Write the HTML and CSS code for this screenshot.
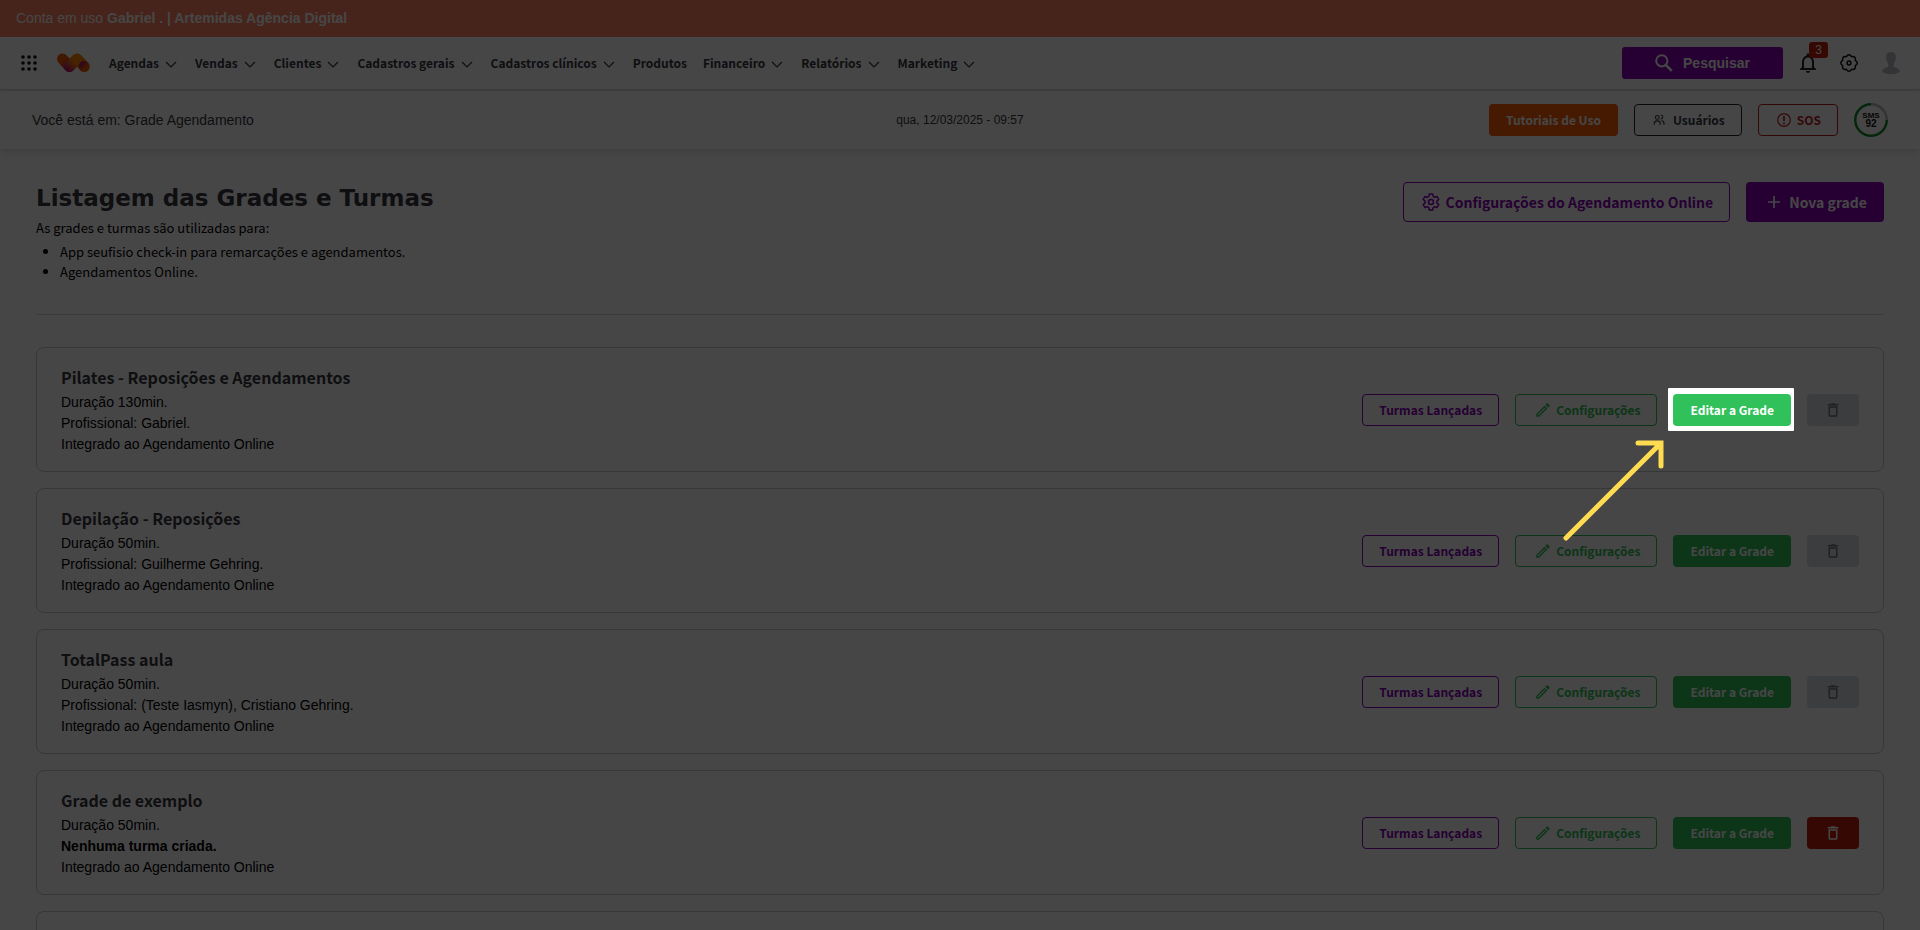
FILE: index.html
```html
<!DOCTYPE html>
<html lang="pt-BR">
<head>
<meta charset="utf-8">
<meta name="viewport" content="width=device-width, initial-scale=1">
<title>Grade Agendamento</title>
<link rel="stylesheet" href="styles.css">
</head>
<body>
<svg class="sprite" aria-hidden="true">
  <symbol id="chevron" viewBox="0 0 16 16"><path d="M3 7l5 5 5-5" fill="none" stroke="currentColor" stroke-width="1.2"/></symbol>
  <symbol id="pencil" viewBox="0 0 24 24"><path fill="currentColor" d="M14.06 9.02l.92.92L5.92 19H5v-.92l9.06-9.06M17.66 3c-.25 0-.51.1-.7.29l-1.83 1.83 3.75 3.75 1.83-1.83c.39-.39.39-1.02 0-1.41l-2.34-2.34c-.2-.2-.45-.29-.71-.29zm-3.6 3.19L3 17.25V21h3.75L17.81 9.94l-3.75-3.75z"/></symbol>
  <symbol id="trash" viewBox="0 0 24 24"><path fill="currentColor" d="M6 19c0 1.1.9 2 2 2h8c1.1 0 2-.9 2-2V7H6v12zM8 9h8v10H8V9zm7.5-5l-1-1h-5l-1 1H5v2h14V4z"/></symbol>
</svg>

<div class="account-bar">Conta em uso <b>Gabriel . | Artemidas Agência Digital</b></div>

<header class="navbar">
  <button class="icon-btn" aria-label="Aplicativos">
    <svg width="16" height="16" viewBox="0 0 16 16" fill="#111"><circle cx="2" cy="2" r="1.8"/><circle cx="8" cy="2" r="1.8"/><circle cx="14" cy="2" r="1.8"/><circle cx="2" cy="8" r="1.8"/><circle cx="8" cy="8" r="1.8"/><circle cx="14" cy="8" r="1.8"/><circle cx="2" cy="14" r="1.8"/><circle cx="8" cy="14" r="1.8"/><circle cx="14" cy="14" r="1.8"/></svg>
  </button>
  <a class="logo" href="#" aria-label="Início">
    <svg width="33" height="20" viewBox="0 0 33 20">
      <defs>
        <linearGradient id="lg1" gradientUnits="userSpaceOnUse" x1="2" y1="3" x2="15" y2="17"><stop offset="0.3" stop-color="#f25a00"/><stop offset="0.9" stop-color="#b0147a"/></linearGradient>
        <linearGradient id="lg2" gradientUnits="userSpaceOnUse" x1="23" y1="3" x2="10" y2="18"><stop offset="0.4" stop-color="#ff8400"/><stop offset="1" stop-color="#b0147a"/></linearGradient>
        <linearGradient id="lg3" gradientUnits="userSpaceOnUse" x1="23" y1="9" x2="31" y2="18"><stop offset="0.1" stop-color="#a8146a"/><stop offset="0.7" stop-color="#f25a00"/></linearGradient>
      </defs>
      <g fill="none" stroke-linecap="round" stroke-linejoin="round" stroke-width="11">
        <path d="M5.500 6L12.500 13.500" stroke="url(#lg1)"/>
        <path d="M12.500 13.500L20 6L25 11" stroke="url(#lg2)"/>
      </g>
      <circle cx="27.200" cy="13.500" r="5.500" fill="url(#lg3)"/>
    </svg>
  </a>
  <nav class="menu">
    <a href="#">Agendas<svg><use href="#chevron"/></svg></a>
    <a href="#">Vendas<svg><use href="#chevron"/></svg></a>
    <a href="#">Clientes<svg><use href="#chevron"/></svg></a>
    <a href="#">Cadastros gerais<svg><use href="#chevron"/></svg></a>
    <a href="#">Cadastros clínicos<svg><use href="#chevron"/></svg></a>
    <a href="#">Produtos</a>
    <a href="#">Financeiro<svg><use href="#chevron"/></svg></a>
    <a href="#">Relatórios<svg><use href="#chevron"/></svg></a>
    <a href="#">Marketing<svg><use href="#chevron"/></svg></a>
  </nav>
  <div class="tools">
    <button class="search">
      <svg width="18" height="18" viewBox="0 0 18 18" fill="none" stroke="currentColor" stroke-width="2"><circle cx="6.800" cy="6.800" r="5.600"/><path d="M10.800 10.800l6 6" stroke-width="2.600"/></svg>
      Pesquisar
    </button>
    <button class="icon-btn bell" aria-label="Notificações">
      <svg width="24" height="24" viewBox="0 0 24 24"><path fill="#222" d="M12 22c1.1 0 2-.9 2-2h-4c0 1.1.9 2 2 2zm6-6v-5c0-3.070-1.630-5.640-4.500-6.320V4c0-.83-.67-1.500-1.500-1.500s-1.500.67-1.500 1.500v.68C7.640 5.360 6 7.920 6 11v5l-2 2v1h16v-1l-2-2zm-2 1H8v-6c0-2.480 1.510-4.500 4-4.500s4 2.020 4 4.500v6z"/></svg>
      <span class="badge">3</span>
    </button>
    <button class="icon-btn gear" aria-label="Ajustes">
      <svg width="20" height="20" viewBox="0 0 20 20" fill="none" stroke="#111" stroke-width="1.500" stroke-linejoin="round"><path d="M16.300 7.400Q20.200 10 16.300 12.600Q17.200 17.200 12.600 16.300Q10 20.200 7.400 16.300Q2.800 17.200 3.700 12.600Q-.2 10 3.700 7.400Q2.800 2.800 7.400 3.700Q10-.2 12.600 3.700Q17.200 2.800 16.300 7.400z"/><circle cx="10" cy="10" r="1.900"/></svg>
    </button>
    <button class="icon-btn avatar" aria-label="Perfil">
      <svg width="22" height="24" viewBox="0 0 22 24" fill="#bdbdc4"><path d="M11 1c3.300 0 5 2 4.800 5.500-.1 2.500-.8 4.700-2 6v3c1.800 1.500 5 1.800 6.200 4.500C17 24.300 5 24.300 2 20c1.200-2.700 4.400-3 6.200-4.500v-3c-1.200-1.300-1.900-3.500-2-6C6 3 7.700 1 11 1z"/></svg>
    </button>
  </div>
</header>

<div class="subbar">
  <div class="crumb">Você está em: Grade Agendamento</div>
  <time class="clock" datetime="2025-03-12T09:57">qua, 12/03/2025 - 09:57</time>
  <div class="shortcuts">
    <button class="btn orange">Tutoriais de Uso</button>
    <button class="btn dark">
      <svg width="12" height="12" viewBox="0 0 14 14" fill="none" stroke="currentColor" stroke-width="1.300"><circle cx="5" cy="4" r="2.200"/><path d="M1.500 12.500V11c0-2 1.500-3 3.500-3s3.500 1 3.500 3v1.500M9 1.200c3.200.3 3.200 4.500 0 5M10 7.500c2 .5 2.800 1.800 2.800 3.500v1.500"/></svg>
      Usuários
    </button>
    <button class="btn red-line">
      <svg width="14" height="14" viewBox="0 0 14 14"><circle cx="7" cy="7" r="6.300" fill="none" stroke="currentColor" stroke-width="1.200"/><path d="M7 3v5M7 9.500v1.700" stroke="currentColor" stroke-width="1.700"/></svg>
      SOS
    </button>
    <div class="sms"><span>SMS</span><span class="count">92</span></div>
  </div>
</div>

<main>
  <section class="intro">
    <div>
      <h1>Listagem das Grades e Turmas</h1>
      <p>As grades e turmas são utilizadas para:</p>
      <ul>
        <li>App seufisio check-in para remarcações e agendamentos.</li>
        <li>Agendamentos Online.</li>
      </ul>
    </div>
    <div class="intro-actions">
      <button class="btn large purple-line">
        <svg width="18" height="18" viewBox="0 0 18 18" fill="none" stroke="currentColor" stroke-width="1.500" stroke-linejoin="round"><path d="M7.300 1h3.400l.5 2.400 1.500.9 2.400-.8 1.700 3-1.900 1.600v1.800l1.900 1.600-1.700 3-2.400-.8-1.500.9-.5 2.400H7.300l-.5-2.400-1.500-.9-2.400.8-1.700-3 1.900-1.600V8.100L1.200 6.500l1.700-3 2.400.8 1.500-.9z"/><circle cx="9" cy="9" r="2.500"/></svg>
        Configurações do Agendamento Online
      </button>
      <button class="btn large purple">
        <svg width="18" height="18" viewBox="0 0 18 18"><path d="M9 3v12M3 9h12" stroke="currentColor" stroke-width="1.700"/></svg>
        Nova grade
      </button>
    </div>
  </section>

  <section class="cards">
    <article class="card">
      <div class="info">
        <h2>Pilates - Reposições e Agendamentos</h2>
        <p>Duração 130min.</p>
        <p>Profissional: Gabriel.</p>
        <p>Integrado ao Agendamento Online</p>
      </div>
      <div class="actions">
        <button class="btn purple-line">Turmas Lançadas</button>
        <button class="btn green-line"><svg class="pencil"><use href="#pencil"/></svg>Configurações</button>
        <div class="spotlight">
          <button class="btn green">Editar a Grade</button>
          <svg class="arrow" width="106" height="106" viewBox="0 0 106 106" fill="none" stroke="#ffdc50" stroke-width="5" stroke-linecap="round"><path d="M5 100L99 6M77 5h23v23"/></svg>
        </div>
        <button class="btn trash" disabled aria-label="Excluir"><svg><use href="#trash"/></svg></button>
      </div>
    </article>

    <article class="card">
      <div class="info">
        <h2>Depilação - Reposições</h2>
        <p>Duração 50min.</p>
        <p>Profissional: Guilherme Gehring.</p>
        <p>Integrado ao Agendamento Online</p>
      </div>
      <div class="actions">
        <button class="btn purple-line">Turmas Lançadas</button>
        <button class="btn green-line"><svg class="pencil"><use href="#pencil"/></svg>Configurações</button>
        <button class="btn green">Editar a Grade</button>
        <button class="btn trash" disabled aria-label="Excluir"><svg><use href="#trash"/></svg></button>
      </div>
    </article>

    <article class="card">
      <div class="info">
        <h2>TotalPass aula</h2>
        <p>Duração 50min.</p>
        <p>Profissional: (Teste Iasmyn), Cristiano Gehring.</p>
        <p>Integrado ao Agendamento Online</p>
      </div>
      <div class="actions">
        <button class="btn purple-line">Turmas Lançadas</button>
        <button class="btn green-line"><svg class="pencil"><use href="#pencil"/></svg>Configurações</button>
        <button class="btn green">Editar a Grade</button>
        <button class="btn trash" disabled aria-label="Excluir"><svg><use href="#trash"/></svg></button>
      </div>
    </article>

    <article class="card">
      <div class="info">
        <h2>Grade de exemplo</h2>
        <p>Duração 50min.</p>
        <p><b>Nenhuma turma criada.</b></p>
        <p>Integrado ao Agendamento Online</p>
      </div>
      <div class="actions">
        <button class="btn purple-line">Turmas Lançadas</button>
        <button class="btn green-line"><svg class="pencil"><use href="#pencil"/></svg>Configurações</button>
        <button class="btn green">Editar a Grade</button>
        <button class="btn trash" aria-label="Excluir"><svg><use href="#trash"/></svg></button>
      </div>
    </article>

    <article class="card"></article>
  </section>
</main>
</body>
</html>
```

FILE: styles.css
```css
:root {
  --ui: "Noto Sans CJK SC", "Noto Sans", sans-serif;
  --text: "Liberation Sans", Arial, sans-serif;
  --purple: #8a00b9;
  --green: #31c15a;
  --ink: #37373f;
}

* { box-sizing: border-box; }

/* Scrolling is locked while the tour step is open */
body {
  margin: 0;
  height: 100vh;
  overflow: hidden;
  background: #fff;
  color: #000;
  font: 14px/21px var(--text);
}

h1, h2, p, ul { margin: 0; }
a { color: inherit; text-decoration: none; }
button { font: inherit; color: inherit; cursor: pointer; }
.sprite { display: none; }

.account-bar {
  padding: 8px 16px;
  background: #ff8362;
  color: #fff;
}

.navbar {
  display: flex;
  align-items: center;
  min-height: 54px;
  padding: 0 18px 0 16px;
  border-bottom: 2px solid #e4e4e6;
}

.icon-btn {
  display: flex;
  padding: 0;
  border: 0;
  background: none;
}
.navbar > .icon-btn { padding: 0 5px; }

.logo {
  display: flex;
  margin: 0 19px 0 15px;
}

.menu {
  display: flex;
  gap: 16px;
  font: 700 12px/20px var(--ui);
  color: var(--ink);
}
.menu a {
  display: flex;
  align-items: center;
  gap: 4px;
  white-space: nowrap;
}
.menu svg {
  width: 16px;
  height: 16px;
}

.tools {
  display: flex;
  align-items: center;
  margin-left: auto;
}
.search {
  display: flex;
  align-items: center;
  justify-content: center;
  gap: 10px;
  width: 161px;
  height: 32px;
  margin-right: 13px;
  border: 0;
  border-radius: 3px;
  background: var(--purple);
  color: #fff;
  font-weight: 700;
}
.bell { position: relative; margin-right: 19px; }
.badge {
  position: absolute;
  left: 13px;
  top: -9px;
  width: 19px;
  border-radius: 3px;
  background: #c11d0b;
  color: #fff;
  font-size: 12px;
  line-height: 16px;
  text-align: center;
}
.gear { margin-right: 21px; }

.subbar {
  display: grid;
  grid-template-columns: 1fr auto 1fr;
  align-items: center;
  min-height: 58px;
  padding: 0 32px;
  color: var(--ink);
  box-shadow: 0 2px 8px rgba(0, 0, 0, 0.15);
}
.clock { font-size: 12px; }
.shortcuts {
  display: flex;
  align-items: center;
  justify-content: flex-end;
  gap: 16px;
}

.btn {
  display: flex;
  align-items: center;
  justify-content: center;
  height: 32px;
  padding: 0 16px;
  border: 1px solid transparent;
  border-radius: 4px;
  background: #fff;
  font: 700 12px/20px var(--ui);
  white-space: nowrap;
}
.btn.large {
  height: 40px;
  padding: 0 16px 0 18px;
  font-size: 14px;
  gap: 6px;
}
.btn.orange { background: #ff5f00; color: #fff; }
.btn.dark, .btn.red-line {
  gap: 8px;
  padding: 0 16px 0 18px;
}
.btn.dark { border-color: #222; color: var(--ink); }
.btn.red-line { gap: 6px; border-color: #c11d1d; color: #c11d1d; }
.btn.purple { background: var(--purple); color: #fff; }
.btn.purple-line { border-color: var(--purple); color: var(--purple); }
.btn.green { background: var(--green); color: #fff; }
.btn.green-line {
  gap: 4px;
  padding: 0 16px 0 18px;
  border-color: var(--green);
  color: var(--green);
}
.btn.trash { width: 52px; padding: 0; background: #c11d0b; color: #fff; }
.btn.trash:disabled { background: #d9dee4; color: #777; }
.btn.trash svg, .pencil { width: 18px; height: 18px; }

.sms {
  display: flex;
  flex-direction: column;
  align-items: center;
  justify-content: center;
  width: 34px;
  height: 34px;
  border-radius: 50%;
  background:
    radial-gradient(circle, #fff 14px, transparent 15px),
    conic-gradient(#bbb 25%, #168a2c 0);
  font-size: 8px;
  line-height: 8px;
  color: #111;
  font-weight: 700;
}
.sms .count { font-size: 10px; }

main { padding: 33px 36px; }

.intro {
  display: flex;
  align-items: flex-start;
  justify-content: space-between;
  padding-bottom: 32px;
  border-bottom: 1px solid #d8d8dc;
  font: 13px/20px var(--ui);
}
.intro h1 {
  margin: 0 0 4px;
  font: 700 23px/32px "DejaVu Sans", sans-serif;
  color: var(--ink);
}
.intro ul { margin-top: 4px; padding-left: 24px; }
.intro-actions { display: flex; gap: 16px; }

.cards {
  display: grid;
  gap: 16px;
  margin-top: 32px;
}
.card {
  display: flex;
  align-items: center;
  justify-content: space-between;
  min-height: 125px;
  padding: 16px 24px;
  border: 1px solid #c9c9d0;
  border-radius: 8px;
}
.card h2 {
  padding-bottom: 2px;
  font: 700 16px/25px var(--ui);
  color: var(--ink);
}
.actions { display: flex; gap: 16px; }

/* Tour step: highlighted button, everything around it dimmed */
.spotlight { position: relative; z-index: 10; }
.spotlight::before {
  content: "";
  position: absolute;
  inset: -6px -3px -5px -5px;
  z-index: -1;
  border-radius: 1px;
  background: #fff;
  box-shadow: 0 0 0 4000px rgba(0, 0, 0, 0.725);
}
.arrow {
  position: absolute;
  left: -112px;
  top: 44px;
}
```
